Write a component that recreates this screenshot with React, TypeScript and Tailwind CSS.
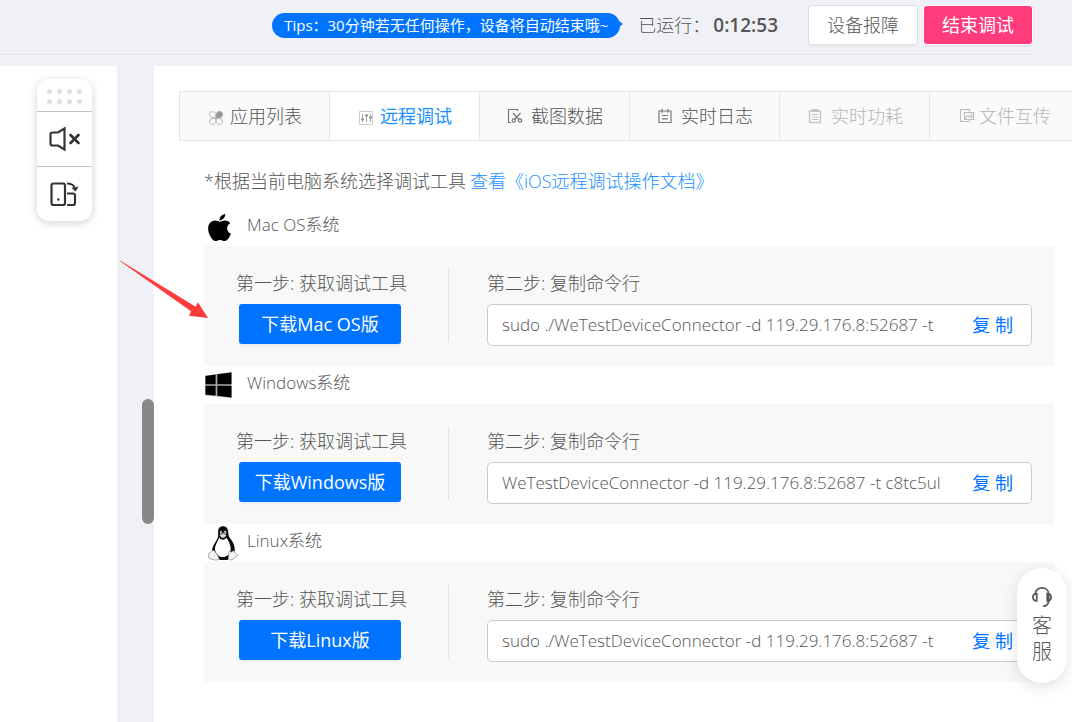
import { useState } from "react";
import type { ReactNode } from "react";
import { FaApple } from "react-icons/fa";

interface System {
  id: string;
  name: string;
  download: string;
  command: string;
  icon: ReactNode;
}

interface Tab {
  id: string;
  label: string;
  icon: ReactNode;
  disabled?: boolean;
}

function WindowsLogo() {
  return (
    <svg width="27" height="26" viewBox="0 0 27 26" className="ml-px">
      <path d="M0 3.8 26.500 0v26L0 23.200z" fill="#aaa" />
      <path
        d="M.5 4 10.600 2.600v9.600H.5zM12.300 2.300 26.500.4v11.800H12.300zM.5 13.800h10.100v9.800L.5 22.700zM12.300 13.800h14.200v11.800l-14.200-1.800z"
        fill="#000"
      />
    </svg>
  );
}

function TuxLogo() {
  return (
    <svg width="30" height="35" viewBox="0 0 30 35" className="ml-1">
      <path
        d="M15 .3c-3.400 0-5 2.400-4.900 5.700.1 4 .3 5.500-1.500 8.200-2 3-3.800 5.700-4.500 9.300-.4 2.500.3 4.500 1.600 5.500L12 34h7.500l5.300-6c1.700-1 2.200-3.200 1.900-6-.4-3.800-2.500-6.900-4.300-9.200-2.200-2.800-1.900-4.300-2.200-7C19.900 2.500 18.300.3 15 .3z"
        fill="#0b0b0b"
      />
      <path
        d="M11.300 11.500c1 1.500 2.300 2.400 3.800 2.200 1.500-.1 2.600-1 3.600-1.900 1.200 2.600 3.800 6.200 4 10.500.2 4-2.200 8-6.700 8.700-4 .5-6.500-1.500-8.200-4.500-1.700-3.300-.6-6.600 1-9.800 1-2 2-3.400 2.500-5.200z"
        fill="#fff"
      />
      <ellipse cx="13" cy="6.500" rx="1.200" ry="1.700" fill="#ddd" />
      <ellipse cx="17" cy="6.500" rx="1.400" ry="1.800" fill="#ddd" />
      <circle cx="13.300" cy="6.900" r=".6" />
      <circle cx="16.700" cy="6.900" r=".6" />
      <path d="M11.700 9.300c1.200-1.200 2.300-1.700 3.300-1.700s2.200.7 3.300 1.600c-.8 1.500-2 2.700-3.400 2.700-1.300 0-2.400-1.200-3.200-2.600z" fill="#d8d8d8" stroke="#777" strokeWidth=".5" />
      <path
        d="M4.700 24.500c1.500-.5 2.600 1.500 3.700 3.300 1.100 1.700 2.700 3.200 2.200 4.800-.5 1.700-2.500 2-4.600 1.200-1.600-.6-3.300-.9-4.800-1.300-1.300-.5-.4-1.800-.4-3 0-1.300-.5-2.200.6-2.700 1.600-.6 2-1.800 3.300-2.300z"
        fill="#f2f2f2"
        stroke="#888"
        strokeWidth=".7"
      />
      <path
        d="M21.500 25.500c1 .9 2.500.7 3.600-.8.900-.1 1.200 1.500 1.800 2.300 1 1.100 2.600 1.500 2.600 2.500 0 1-2.200 1.700-3.400 2.700-1.400 1.300-2.700 2.300-4.400 1.600-1.700-.8-1.300-3-1.100-4.800.2-1.500-.3-3.400.9-3.500z"
        fill="#f2f2f2"
        stroke="#888"
        strokeWidth=".7"
      />
    </svg>
  );
}

const systems: System[] = [
  {
    id: "mac",
    name: "Mac OS系统",
    download: "下载Mac OS版",
    command: "sudo ./WeTestDeviceConnector -d 119.29.176.8:52687 -t",
    icon: <FaApple size={31} className="text-black" />,
  },
  {
    id: "windows",
    name: "Windows系统",
    download: "下载Windows版",
    command: "WeTestDeviceConnector -d 119.29.176.8:52687 -t c8tc5ul",
    icon: <WindowsLogo />,
  },
  {
    id: "linux",
    name: "Linux系统",
    download: "下载Linux版",
    command: "sudo ./WeTestDeviceConnector -d 119.29.176.8:52687 -t",
    icon: <TuxLogo />,
  },
];

const tabs: Tab[] = [
  {
    id: "apps",
    label: "应用列表",
    icon: (
      <svg width="16" height="16" viewBox="0 0 16 16" fill="none" stroke="#bbb" className="mt-1 mr-[6px]">
        <path d="M7.500 7.500H4.500a3 3 0 1 1 3-3zM7.500 8.500v3a3 3 0 1 1-3-3zM8.500 8.500h3a3 3 0 1 1-3 3z" />
        <path d="M8.500 7.500v-3a3 3 0 1 1 3 3z" fill="#999" stroke="#999" />
      </svg>
    ),
  },
  {
    id: "remote",
    label: "远程调试",
    icon: (
      <svg width="16" height="16" viewBox="0 0 16 16" fill="none" className="mt-1 mr-[6px]">
        <path d="M1.500 1.500h13v13h-13z" stroke="#ccc" />
        <path d="M4.500 4v8M8.500 4v8M12.500 4v8" stroke="#aaa" />
        <path d="M3 9.500h3M7 5.500h3M11 7.500h3" stroke="#999" strokeWidth="2" />
      </svg>
    ),
  },
  {
    id: "screens",
    label: "截图数据",
    icon: (
      <svg width="16" height="16" viewBox="0 0 16 16" fill="none" stroke="#777" strokeWidth="1.200" className="mr-2">
        <path d="M10.500 3V1.500h-9v13H4M6 5l6 6.500M13.500 5l-6 6.500" />
        <circle cx="6.800" cy="12.500" r="1.700" />
        <circle cx="13" cy="12.500" r="1.700" />
      </svg>
    ),
  },
  {
    id: "logs",
    label: "实时日志",
    icon: (
      <svg width="16" height="16" viewBox="0 0 16 16" fill="none" stroke="#777" strokeWidth="1.200" className="mr-2">
        <path d="M2 3h12v11.500H2zM5 .8v4M11 .8v4M5 7.500h6M5 10.800h6" />
      </svg>
    ),
  },
  {
    id: "power",
    label: "实时功耗",
    disabled: true,
    icon: (
      <svg width="16" height="16" viewBox="0 0 16 16" fill="none" stroke="#c4c4c4" className="mr-2">
        <path d="M2.500 3h11v11.500h-11z" strokeWidth="1.400" />
        <path d="M5 1.500h6v2H5z" fill="#c4c4c4" />
        <path d="M4.500 6.500h7M4.500 9h7M4.500 11.500h7" />
      </svg>
    ),
  },
  {
    id: "files",
    label: "文件互传",
    disabled: true,
    icon: (
      <svg width="16" height="16" viewBox="0 0 16 16" fill="none" stroke="#bbb" className="mr-1">
        <path d="M10.500 4V1.500h-9v12h9V12" />
        <path d="M5.500 4.500h9v7h-9zM6 10.500l3-3 2.500 2 3-2" strokeWidth="1.200" />
        <circle cx="12" cy="6.500" r=".5" />
      </svg>
    ),
  },
];

function Toolbar() {
  return (
    <div className="ml-[37px] mr-[25px] mt-[13px] overflow-hidden rounded-xl bg-white shadow-[0_2px_8px_rgba(0,0,0,0.18)]">
      <div className="grid grid-cols-4 gap-[5px] px-[10px] pb-[7px] pt-[10px]">
        {Array.from({ length: 8 }, (_, i) => (
          <span key={i} className="h-[5px] w-[5px] rounded-full bg-[#e0e0e0]" />
        ))}
      </div>
      <button
        type="button"
        aria-label="静音"
        className="flex h-[55px] w-full items-center justify-center border-t border-[#c4c4c4]"
      >
        <svg width="36" height="28" viewBox="0 0 36 28" fill="none" stroke="#333" strokeWidth="2.200">
          <path d="M17.500 3.500v21L11 20.500H5.500q-2 0-2-2v-9q0-2 2-2H11z" />
          <path d="m23.500 10 8 8M31.500 10l-8 8" strokeWidth="2.600" strokeLinecap="round" />
        </svg>
      </button>
      <button
        type="button"
        aria-label="旋转屏幕"
        className="flex h-[55px] w-full items-center justify-center border-t border-[#c4c4c4]"
      >
        <svg width="32" height="28" viewBox="0 0 32 28" fill="none" stroke="#333" strokeWidth="2.200">
          <rect x="2.500" y="3.500" width="13.500" height="21.500" rx="2" />
          <circle cx="9.300" cy="19.500" r="1.200" fill="#333" stroke="none" />
          <path d="M18 3.500c4 0 6.500 1.500 7.500 4M18 13.500h6q2 0 2 2v7.500q0 2-2 2h-6" />
          <path d="m22.500 8 7-1.500-2.800 5z" fill="#333" stroke="none" />
        </svg>
      </button>
    </div>
  );
}

function SystemPanel({ system }: { system: System }) {
  return (
    <section>
      <h2 className="flex h-[38px] items-center text-[17px]">
        <span className="flex h-full w-[43px] shrink-0 items-center">{system.icon}</span>
        <span className="pb-1">{system.name}</span>
      </h2>
      <div className="flex h-[120px] items-start bg-[#f8f8f8] pl-8 pr-[22px] pt-[23px]">
        <div className="h-[73px] w-[213px] shrink-0 border-r border-[#e2e2e2]">
          <p className="leading-7">第一步: 获取调试工具</p>
          <button
            type="button"
            className="ml-[3px] mt-[7px] h-10 w-[162px] rounded-[3px] bg-[#0074ff] font-normal text-white shadow-[0_2px_2px_rgba(0,0,0,0.05)]"
          >
            {system.download}
          </button>
        </div>
        <div className="min-w-0 flex-1 pl-[38px]">
          <label htmlFor={system.id} className="block leading-7">
            第二步: 复制命令行
          </label>
          <div className="mt-[7px] flex h-[42px] items-center rounded-[5px] border border-[#ccc] bg-white">
            <input
              id={system.id}
              readOnly
              value={system.command}
              className="ml-[14px] min-w-0 flex-1 bg-transparent text-[17px] outline-none"
            />
            <button type="button" className="ml-8 mr-[18px] shrink-0 font-normal text-[#0074ff]">
              复 制
            </button>
          </div>
        </div>
      </div>
    </section>
  );
}

export default function App() {
  const [active, setActive] = useState("remote");

  return (
    <div className="relative flex min-h-screen flex-col overflow-hidden bg-[#f0f1f6] font-['Open_Sans','Noto_Sans_CJK_SC',sans-serif] text-[18px] font-light text-[#555]">
      <header className="mr-10 flex h-[55px] items-center justify-end border-b border-[#e3e3e6] pb-1">
        <div className="relative mr-[18px] h-[25px] rounded-full bg-[#0074ff] px-3 text-[15px] leading-[25px] font-normal text-white">
          Tips：30分钟若无任何操作，设备将自动结束哦~
          <svg width="8" height="12" viewBox="0 0 8 12" className="absolute -right-[3px] top-[5px]">
            <path d="M0 0 8 6 0 12z" fill="#0074ff" />
          </svg>
        </div>
        <span>已运行：</span>
        <time className="ml-[3px] mr-[30px] text-[19px] font-semibold">0:12:53</time>
        <button
          type="button"
          className="mr-[6px] h-10 w-[110px] rounded-[3px] border border-[#ddd] bg-white shadow-[0_2px_2px_rgba(0,0,0,0.03)]"
        >
          设备报障
        </button>
        <button
          type="button"
          className="h-[38px] w-[108px] rounded-[3px] bg-[#ff3b7c] font-normal text-white shadow-[0_0_0_1px_#fff,0_2px_2px_rgba(0,0,0,0.1)]"
        >
          结束调试
        </button>
      </header>

      <div className="mt-[11px] flex flex-1">
        <aside className="w-[117px] shrink-0 bg-white">
          <Toolbar />
        </aside>
        <div className="flex w-[37px] shrink-0 justify-end">
          <div className="mt-[333px] h-[125px] w-3 rounded-full bg-[#888]" />
        </div>

        <main className="min-w-0 flex-1 bg-white pl-[25px] pt-[25px]">
          <nav className="flex h-[50px] overflow-hidden border-y border-l border-[#e6e6e6] bg-[#fafafa]">
            {tabs.map((tab) => (
              <button
                key={tab.id}
                type="button"
                disabled={tab.disabled}
                onClick={() => setActive(tab.id)}
                className={`flex w-[150px] shrink-0 items-center justify-center border-r border-[#e6e6e6] pl-px ${
                  tab.disabled
                    ? "text-[#b5b5b5]"
                    : active === tab.id
                      ? "bg-white font-normal text-[#1890ff]"
                      : "text-[#555]"
                }`}
              >
                {tab.icon}
                {tab.label}
              </button>
            ))}
          </nav>

          <div className="pb-10 pl-[25px] pr-[18px] pt-[26px]">
            <p className="mb-[13px] leading-7">
              *根据当前电脑系统选择调试工具
              <a href="#docs" className="ml-1 text-[#1890ff]">
                查看《iOS远程调试操作文档》
              </a>
            </p>
            {systems.map((system) => (
              <SystemPanel key={system.id} system={system} />
            ))}
          </div>
        </main>
      </div>

      {/* Pointer to the download button */}
      <svg width="90" height="60" viewBox="0 0 90 60" className="pointer-events-none absolute left-[119px] top-[260px]">
        <path d="M.5.8 1.500.8 76.700 46.700 79 42.300 89 58 70 55.700 72 51.300z" fill="#ff3b3b" />
      </svg>

      {/* Customer service */}
      <button
        type="button"
        className="absolute bottom-[39px] right-[5px] flex w-[50px] flex-col items-center rounded-full bg-white pb-[18px] pt-[18px] text-[20px] leading-[26px] shadow-[0_4px_16px_rgba(0,0,0,0.12)]"
      >
        <svg width="22" height="23" viewBox="0 0 22 24" fill="none" stroke="#555" strokeWidth="1.800" className="mb-1">
          <path d="M4 8.500C4 4.500 7 2 11 2s7 2.500 7 6.500v6c0 4-2 6.500-6 6.500" />
          <path d="M5.500 8v7.500C3 15.500 1.500 14 1.500 11.800S3 8 5.500 8zM16.500 8v7.500c2.500 0 4-1.500 4-3.700S19 8 16.500 8z" />
        </svg>
        <span>客</span>
        <span>服</span>
      </button>
    </div>
  );
}
